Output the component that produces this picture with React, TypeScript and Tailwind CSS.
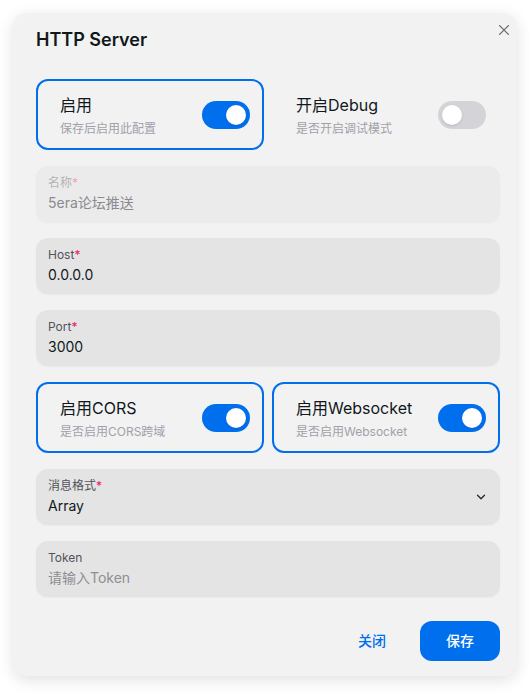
import { X, ChevronDown } from "lucide-react";

const FONT = "font-['Inter','Noto_Sans_CJK_SC',sans-serif]";

const Toggle = ({ on }: { on: boolean }) => (
  <div
    className={`flex h-7 w-12 shrink-0 items-center rounded-full px-1 ${
      on ? "justify-end bg-[#006fee]" : "justify-start bg-[#d4d4d8]"
    }`}
  >
    <div className="h-5 w-5 rounded-full bg-white shadow-sm" />
  </div>
);

const SwitchCard = ({
  title,
  desc,
  on,
  bordered,
}: {
  title: string;
  desc: string;
  on: boolean;
  bordered?: boolean;
}) => (
  <div
    className={`flex h-[71px] items-center justify-between rounded-xl border-2 pl-[22px] pr-3 ${
      bordered ? "border-[#006fee]" : "border-transparent"
    }`}
  >
    <div className="flex flex-col gap-1">
      <span className="text-base leading-6 text-[#11181c]">{title}</span>
      <span className="text-xs leading-4 text-[#a1a1aa]">{desc}</span>
    </div>
    <Toggle on={on} />
  </div>
);

const Field = ({
  label,
  value,
  required,
  disabled,
  placeholder,
  select,
}: {
  label: string;
  value?: string;
  required?: boolean;
  disabled?: boolean;
  placeholder?: string;
  select?: boolean;
}) => (
  <div
    className={`flex h-14 items-center rounded-xl pl-3 pr-3 shadow-[0_1px_2px_rgba(0,0,0,0.04)] ${
      disabled ? "bg-[#ebebeb]" : "bg-[#e4e4e4]"
    }`}
  >
    <div className="flex flex-1 flex-col gap-0.5">
      <span
        className={`text-xs leading-4 ${
          disabled ? "text-[#b4b4b8]" : "text-[#52525b]"
        }`}
      >
        {label}
        {required && (
          <span className={disabled ? "text-[#f7a1bd]" : "text-[#f31260]"}>*</span>
        )}
      </span>
      {value ? (
        <span
          className={`text-sm leading-5 ${
            disabled ? "text-[#8a8a90]" : "text-[#11181c]"
          }`}
        >
          {value}
        </span>
      ) : (
        <span className="text-sm leading-5 text-[#8e8e95]">{placeholder}</span>
      )}
    </div>
    {select && <ChevronDown className="h-3.5 w-3.5 text-[#27272a]" strokeWidth={2.2} />}
  </div>
);

export default function App() {
  return (
    <div className={`min-h-[695px] bg-white pt-[13px] ${FONT}`}>
      <div className="relative mx-[13px] w-[504px] rounded-[14px] bg-[#f2f2f2] pb-[15px] pl-[23px] pr-[17px] pt-[13px] shadow-[0_4px_16px_rgba(0,0,0,0.12)]">
        <button className="absolute right-[4px] top-[8px] flex h-[18px] w-[18px] items-center justify-center text-[#71717a]">
          <X className="h-[18px] w-[18px]" strokeWidth={1.5} />
        </button>
        <h2 className="h-7 text-lg font-semibold leading-7 text-[#11181c]">HTTP Server</h2>

        <div className="mt-[25px] flex flex-col gap-4">
          <div className="grid grid-cols-2 gap-2">
            <SwitchCard title="启用" desc="保存后启用此配置" on bordered />
            <SwitchCard title="开启Debug" desc="是否开启调试模式" on={false} />
          </div>
          <Field label="名称" value="5era论坛推送" required disabled />
          <Field label="Host" value="0.0.0.0" required />
          <Field label="Port" value="3000" required />
          <div className="grid grid-cols-2 gap-2">
            <SwitchCard title="启用CORS" desc="是否启用CORS跨域" on bordered />
            <SwitchCard title="启用Websocket" desc="是否启用Websocket" on bordered />
          </div>
          <Field label="消息格式" value="Array" required select />
          <Field label="Token" placeholder="请输入Token" />
        </div>

        <div className="mt-6 flex justify-end gap-2">
          <button className="h-10 w-20 rounded-xl text-sm font-medium text-[#006fee]">
            关闭
          </button>
          <button className="h-10 w-20 rounded-xl bg-[#006fee] text-sm font-medium text-white">
            保存
          </button>
        </div>
      </div>
    </div>
  );
}
